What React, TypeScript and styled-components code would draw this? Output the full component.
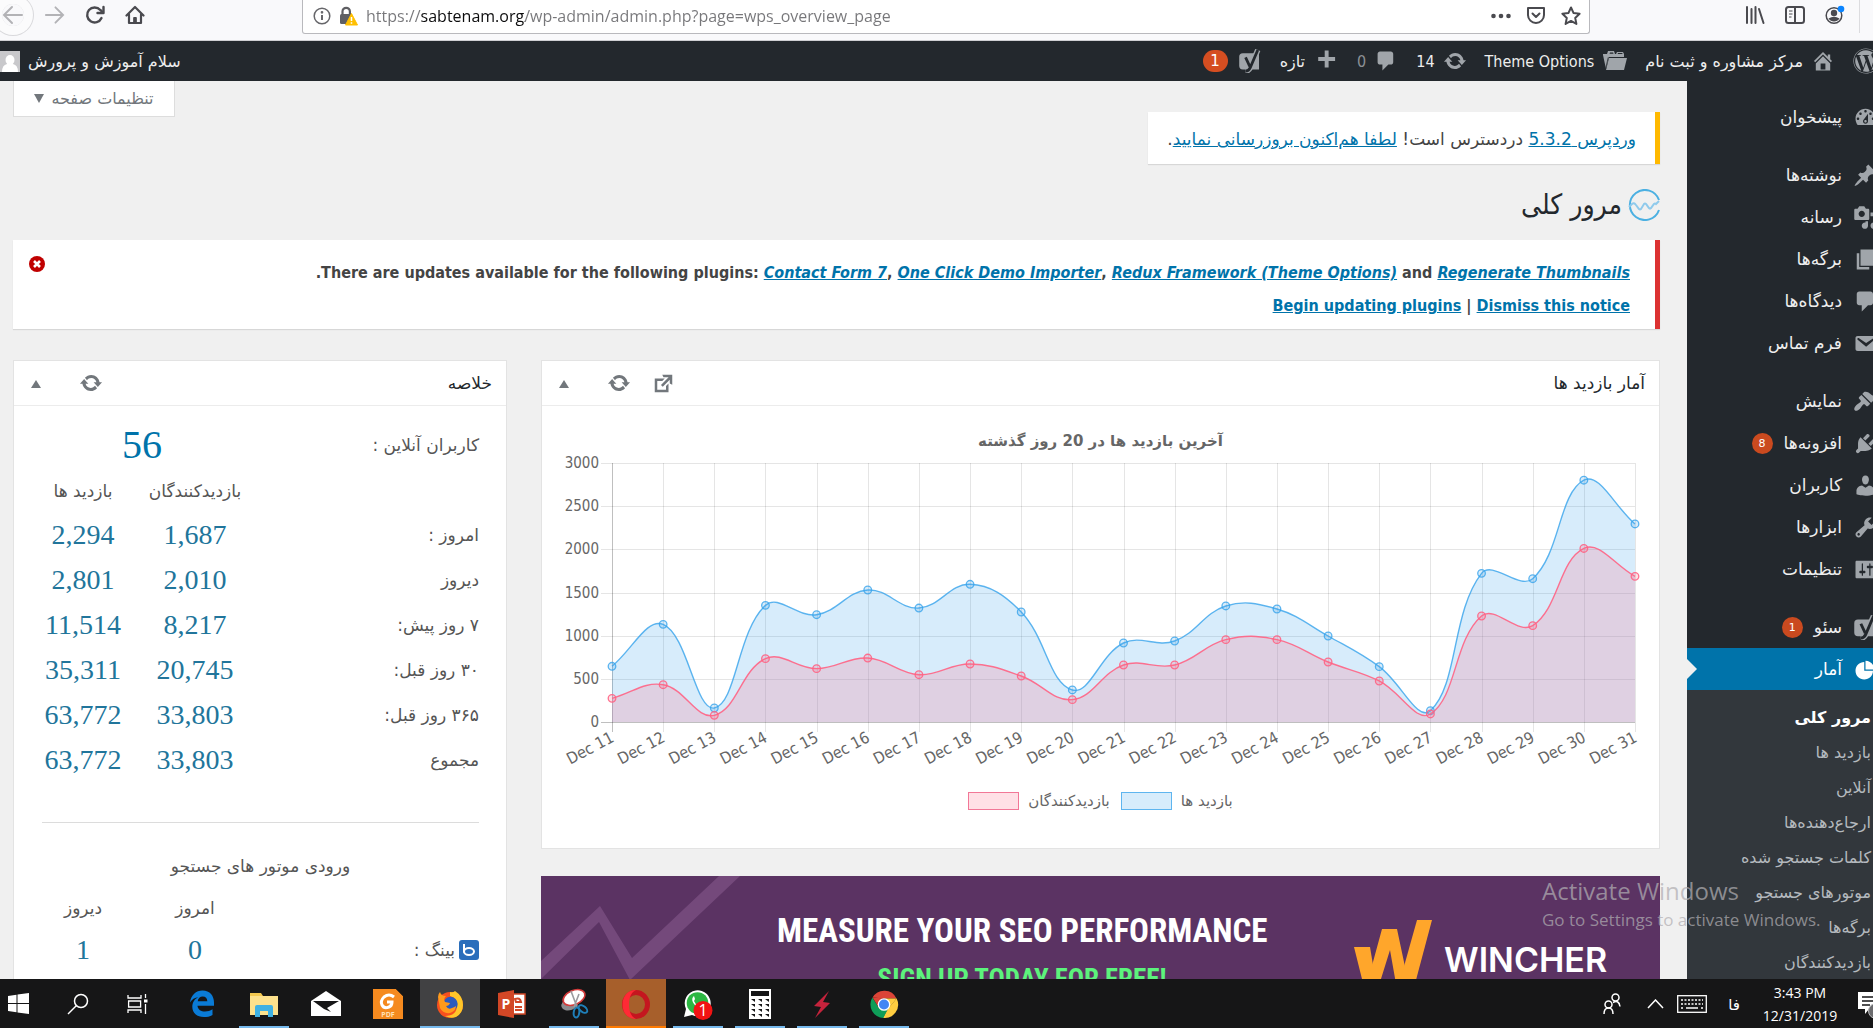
import React from "react";
import styled, { createGlobalStyle, css } from "styled-components";
import { FaWordpress } from "react-icons/fa";

const ui = '"DejaVu Sans Condensed", "DejaVu Sans", sans-serif';
const fa = '"DejaVu Sans", sans-serif';
const segoe = '"Open Sans", "Noto Sans", "DejaVu Sans", sans-serif';

const Global = createGlobalStyle`
  * { box-sizing: border-box; }
  body { margin: 0; background: #f0f0f0; font-family: ${fa}; }
  button { font: inherit; color: inherit; background: none; border: 0; padding: 0; cursor: pointer; }
  h1, h2, h3 { font-weight: normal; }
  h1, h2, h3, p, ul { margin: 0; padding: 0; }
  ul { list-style: none; }
  svg { display: block; flex: none; }
`;

/* ---------- icon shapes on a 20 unit grid ---------- */
const D = {
  dashboard:
    "M3.76 16h12.48c1.1-1.37 1.76-3.11 1.76-5 0-4.42-3.58-8-8-8s-8 3.58-8 8c0 1.89.66 3.63 1.76 5zM10 4c.55 0 1 .45 1 1s-.45 1-1 1-1-.45-1-1 .45-1 1-1zM6 6c.55 0 1 .45 1 1s-.45 1-1 1-1-.45-1-1 .45-1 1-1zm8 0c.55 0 1 .45 1 1s-.45 1-1 1-1-.45-1-1 .45-1 1-1zm-5.37 5.55L12 7v6c0 1.1-.9 2-2 2s-2-.9-2-2c0-.57.24-1.08.63-1.45zM4 10c.55 0 1 .45 1 1s-.45 1-1 1-1-.45-1-1 .45-1 1-1zm12 0c.55 0 1 .45 1 1s-.45 1-1 1-1-.45-1-1 .45-1 1-1zm-5 3c0-.55-.45-1-1-1s-1 .45-1 1 .45 1 1 1 1-.45 1-1z",
  post: "M10.44 3.02l1.82-1.82 6.36 6.35-1.83 1.82c-1.05-.68-2.48-.57-3.41.36l-.75.75c-.92.93-1.04 2.35-.35 3.41l-1.83 1.82-2.41-2.41-2.8 2.79c-.42.42-3.38 2.71-3.8 2.29s1.86-3.39 2.28-3.81l2.79-2.79L4.1 9.36l1.83-1.82c1.05.69 2.48.57 3.4-.36l.75-.75c.93-.92 1.05-2.35.36-3.41z",
  media:
    "M13 11V4c0-.55-.45-1-1-1h-1.67L9 1H5L3.67 3H2c-.55 0-1 .45-1 1v7c0 .55.45 1 1 1h10c.55 0 1-.45 1-1zM7 4.5c1.38 0 2.5 1.12 2.5 2.5S8.38 9.5 7 9.5 4.5 8.38 4.5 7 5.62 4.5 7 4.5zM14 6h5v10.5c0 1.38-1.12 2.5-2.5 2.5S14 17.88 14 16.5s1.12-2.5 2.5-2.5c.17 0 .34.02.5.05V9h-3V6zm-4 8.05V13h2v3.5c0 1.38-1.12 2.5-2.5 2.5S7 17.88 7 16.5 8.12 14 9.5 14c.17 0 .34.02.5.05z",
  page: "M6 15V2h10v13H6zm-1 1h8v2H3V5h2v11z",
  comments: "M5 2h9c1.1 0 2 .9 2 2v7c0 1.1-.9 2-2 2h-2l-5 5v-5H5c-1.1 0-2-.9-2-2V4c0-1.1.9-2 2-2z",
  email:
    "M3.87 4h13.25C18.37 4 19 4.59 19 5.79v8.42c0 1.19-.63 1.79-1.88 1.79H3.87c-1.25 0-1.88-.6-1.88-1.79V5.79c0-1.2.63-1.79 1.88-1.79zm6.62 8.6l6.74-5.53c.24-.2.43-.66.13-1.07-.29-.41-.82-.42-1.17-.17l-5.7 3.86L4.8 5.83c-.35-.25-.88-.24-1.17.17-.3.41-.11.87.13 1.07z",
  appearance:
    "M14.48 11.06L7.41 3.99l1.5-1.5c.5-.56 2.3-.47 3.51.32 1.21.8 1.43 1.28 2.91 2.1 1.18.64 2.45 1.26 4.45.85zm-.71.71L6.7 4.7 4.93 6.47c-.39.39-.39 1.02 0 1.41l1.06 1.06c.39.39.39 1.03 0 1.42-.6.6-1.43 1.11-2.21 1.69-.35.26-.7.53-1.01.84C1.43 14.23.4 16.08 1.4 17.07c.99 1 2.84-.03 4.18-1.36.31-.31.58-.66.85-1.02.57-.78 1.08-1.61 1.69-2.21.39-.39 1.02-.39 1.41 0l1.06 1.06c.39.39 1.02.39 1.41 0z",
  plugins:
    "M13.11 4.36L9.87 7.6 8 5.73l3.24-3.24c.35-.34 1.05-.2 1.56.32.52.51.66 1.21.31 1.55zm-8 1.77l.91-1.12 9.01 9.01-1.19.84c-.71.71-2.63 1.16-3.82 1.16H6.14L4.9 17.26c-.59.59-1.54.59-2.12 0-.59-.58-.59-1.53 0-2.12l1.24-1.24v-3.88c0-1.13.4-3.19 1.09-3.89zm7.26 3.97l3.24-3.24c.34-.35 1.04-.21 1.55.31.52.51.66 1.21.31 1.55l-3.24 3.25z",
  users:
    "M10 9.25c-2.27 0-2.73-3.44-2.73-3.44C7 4.02 7.82 2 9.97 2c2.16 0 2.98 2.02 2.71 3.81 0 0-.41 3.44-2.68 3.44zm0 2.57L12.72 10c2.39 0 4.52 2.33 4.52 4.53v2.49s-3.65 1.13-7.24 1.13c-3.65 0-7.24-1.13-7.24-1.13v-2.49c0-2.25 1.94-4.48 4.47-4.48z",
  tools:
    "M16.68 9.77c-1.34 1.34-3.3 1.67-4.95.99l-5.41 6.52c-.99.99-2.59.99-3.58 0s-.99-2.59 0-3.57l6.52-5.42c-.68-1.65-.35-3.61.99-4.95 1.28-1.28 3.12-1.62 4.72-1.06l-2.89 2.89 2.82 2.82 2.86-2.87c.53 1.58.18 3.39-1.08 4.65zM3.81 16.21c.4.39 1.04.39 1.43 0 .4-.4.4-1.04 0-1.43-.39-.4-1.03-.4-1.43 0-.39.39-.39 1.03 0 1.43z",
  settings:
    "M18 16V4c0-.55-.45-1-1-1H3c-.55 0-1 .45-1 1v12c0 .55.45 1 1 1h14c.55 0 1-.45 1-1zM8 11h1c.55 0 1 .45 1 1s-.45 1-1 1H8v1.5c0 .28-.22.5-.5.5s-.5-.22-.5-.5V13H6c-.55 0-1-.45-1-1s.45-1 1-1h1V5.5c0-.28.22-.5.5-.5s.5.22.5.5V11zm5-2h-1c-.55 0-1-.45-1-1s.45-1 1-1h1V5.5c0-.28.22-.5.5-.5s.5.22.5.5V7h1c.55 0 1 .45 1 1s-.45 1-1 1h-1v5.5c0 .28-.22.5-.5.5s-.5-.22-.5-.5V9z",
  pie: "M10 10V3c3.87 0 7 3.13 7 7h-7zM9 4v7h7c0 3.87-3.13 7-7 7s-7-3.13-7-7 3.13-7 7-7z",
  plus: "M17 7v3h-5v5H9v-5H4V7h5V2h3v5z",
  update:
    "M10.2 3.28c3.53 0 6.43 2.61 6.92 6h2.08l-3.5 4-3.5-4h2.32c-.45-1.97-2.21-3.45-4.32-3.45-1.45 0-2.73.71-3.54 1.78L4.95 5.66C6.23 4.2 8.11 3.28 10.2 3.28zm-.4 13.44c-3.52 0-6.43-2.61-6.92-6H.8l3.5-4c1.17 1.33 2.33 2.67 3.5 4H5.48c.45 1.97 2.21 3.45 4.32 3.45 1.45 0 2.73-.71 3.54-1.78l1.71 1.95c-1.28 1.46-3.15 2.38-5.25 2.38z",
  external: "M9 3h8v8l-2-1V6.92l-5.6 5.59-1.41-1.41L14.08 5H10zm3 12v-3l2-2v7H3V6h8L9 8H5v7h7z",
  home: "M16 8.5l1.53 1.53-1.06 1.06L10 4.6l-6.47 6.5-1.06-1.07L10 2.5l4 4v-2h2v4zm-6-2.46l6 5.99V18H4v-5.97zM12 17v-5H8v5h4z",
};

const Dash = ({ d, size = 25 }: { d: string; size?: number }) => (
  <svg width={size} height={size} viewBox="0 0 20 20" fill="currentColor" aria-hidden="true">
    <path d={d} fillRule="evenodd" />
  </svg>
);

const Folder = () => (
  <svg width="25" height="24" viewBox="0 0 25 24" fill="currentColor" aria-hidden="true">
    <path d="M1 5h4l1-3h6l1 3h1l1-2h6l1 2v3H7L4 20 1 6z" />
    <path d="M7 9h18l-3 12H4z" />
    <path d="M7.500 4.800l.5-1.300h3l.5 1.300zM15.500 5l.6-1h4l.6 1z" fill="#23282d" />
    <path d="M6.300 8.300L3.600 20" stroke="#23282d" strokeWidth=".8" fill="none" />
  </svg>
);

const Yoast = ({ size = 25 }: { size?: number }) => (
  <svg width={size} height={size} viewBox="0 0 20 20" aria-hidden="true">
    <path d="M4 3.500h13.500V17H4a3 3 0 0 1-3-3V6.500a3 3 0 0 1 3-3z" fill="currentColor" />
    <path d="M16.500.8L10.200 15.500q-1.200 2.800-4 3" fill="none" stroke="currentColor" strokeWidth="4.600" />
    <path d="M16.500.8L10.200 15.500q-1.200 2.800-4 3M6.300 7l3.500 7.500" fill="none" stroke="#23282d" strokeWidth="2.300" />
  </svg>
);

/* ---------- page shell ---------- */
const Page = styled.div`
  height: 100vh;
  display: flex;
  flex-direction: column;
  overflow: hidden;
`;

/* ---------- browser toolbar ---------- */
const BrowserBar = styled.header`
  height: 41px;
  flex: none;
  display: flex;
  background: #f9f9fb;
  border-bottom: 1px solid #cfcfd3;
  color: #4a4a4f;
  overflow: hidden;
`;
const NavButtons = styled.div`
  display: flex;
  gap: 20px;
  width: 302px;
  height: 30px;
  padding-left: 2px;
  align-items: center;
  flex: none;
`;
const NavButton = styled.button<{ $dim?: boolean }>`
  color: ${(p) => (p.$dim ? "#b3b3b6" : "#4a4a4f")};
`;
const BackButton = styled(NavButton)`
  box-shadow: 0 0 0 9px #fbfbfc, 0 0 0 10px #d9d9dc;
  border-radius: 50%;
`;
const UrlBox = styled.div`
  flex: 1;
  height: 34px;
  display: flex;
  align-items: center;
  gap: 8px;
  padding: 0 8px 2px 10px;
  background: #fff;
  border: 1px solid #b9b9bd;
  border-top: 0;
  border-radius: 0 0 3px 3px;
  color: #66666a;
`;
const UrlInput = styled.input`
  flex: 1;
  min-width: 0;
  height: 26px;
  border: 0;
  outline: 0;
  padding: 0;
  font: 16px ${segoe};
  color: #77777a;
  background: linear-gradient(90deg, #77777a 55px, #0c0c0d 55px, #0c0c0d 159px, #77777a 159px);
  -webkit-background-clip: text;
  background-clip: text;
  -webkit-text-fill-color: transparent;
`;
const UrlActions = styled.div`
  display: flex;
  gap: 15px;
  align-items: center;
`;
const BrowserTools = styled.div`
  display: flex;
  align-items: center;
  justify-content: flex-end;
  gap: 20px;
  width: 283px;
  height: 30px;
  flex: none;
  padding-right: 13px;
`;
const ToolDivider = styled.span`
  width: 1px;
  height: 36px;
  background: #dcdcdf;
  margin-left: -6px;
`;

/* ---------- admin bar ---------- */
const AdminBar = styled.nav`
  height: 40px;
  flex: none;
  display: flex;
  align-items: center;
  background: #23282d;
  color: #eee;
  font-size: 16px;
  overflow: hidden;
`;
const BarItems = styled.div`
  display: flex;
  align-items: center;
  gap: 18px;
  margin-right: -6px;
  flex: 1;
`;
const BarLink = styled.a<{ $dim?: boolean; $latin?: boolean }>`
  display: flex;
  align-items: center;
  gap: 8px;
  color: ${(p) => (p.$dim ? "#8b9095" : "#eee")};
  font-family: ${(p) => (p.$latin ? ui : fa)};
  text-decoration: none;
  white-space: nowrap;
  svg {
    color: #a0a5aa;
  }
`;
const BarBadge = styled.span`
  min-width: 25px;
  height: 22px;
  border-radius: 12px;
  background: #d54e21;
  color: #fff;
  text-align: center;
  line-height: 22px;
  font-size: 15px;
  margin-right: 2px;
`;
const Avatar = styled.span`
  width: 20px;
  height: 21px;
  background: #c8c8cb;
  overflow: hidden;
`;

/* ---------- body ---------- */
const Body = styled.div`
  flex: 1;
  min-height: 0;
  display: flex;
  position: relative;
  overflow: hidden;
`;
const Sidebar = styled.nav`
  width: 200px;
  margin-right: -14px;
  flex: none;
  background: #23282d;
  padding-top: 15px;
  overflow: hidden;
`;
const MenuItem = styled.li<{ $gap?: boolean; $active?: boolean }>`
  ${(p) => p.$gap && css`margin-top: 16px;`}
  ${(p) =>
    p.$active &&
    css`
      background: #0073aa;
      position: relative;
      &::after {
        content: "";
        position: absolute;
        left: 0;
        top: 11px;
        border: 10px solid transparent;
        border-right: 0;
        border-left-color: #f0f0f0;
      }
    `}
`;
const MenuLink = styled.a<{ $active?: boolean }>`
  height: 42px;
  display: flex;
  align-items: center;
  padding-right: 9px;
  gap: 11px;
  font-size: 17px;
  color: ${(p) => (p.$active ? "#fff" : "#eee")};
  text-decoration: none;
  white-space: nowrap;
  svg {
    color: ${(p) => (p.$active ? "#fff" : "#a0a5aa")};
  }
`;
const MenuBadge = styled.span`
  width: 21px;
  height: 21px;
  border-radius: 50%;
  background: #ca4a1f;
  color: #fff;
  font-size: 11px;
  line-height: 21px;
  text-align: center;
`;
const SubMenu = styled.ul`
  background: #32373c;
  padding: 10px 16px 40px 0;
`;
const SubLink = styled.a<{ $current?: boolean }>`
  display: block;
  height: 35px;
  line-height: 35px;
  font-size: 16px;
  white-space: nowrap;
  text-decoration: none;
  color: ${(p) => (p.$current ? "#fff" : "#b4b9be")};
  font-weight: ${(p) => (p.$current ? 700 : 400)};
`;

const Content = styled.main`
  flex: 1;
  min-width: 0;
  display: flex;
  flex-direction: column;
  padding: 0 27px 0 13px;
  color: #444;
`;
const TopRow = styled.div`
  display: flex;
  align-items: flex-start;
  justify-content: space-between;
`;
const Notice = styled.div<{ $tone: string }>`
  background: #fff;
  border-right: 5px solid ${(p) => p.$tone};
  box-shadow: 0 1px 1px rgba(0, 0, 0, 0.1);
  a {
    color: #0073aa;
  }
`;
const UpdateNotice = styled(Notice)`
  margin-top: 31px;
  height: 52px;
  padding: 0 19px;
  line-height: 54px;
  font-size: 17px;
  white-space: nowrap;
`;
const ScreenOptions = styled.button`
  height: 36px;
  width: 162px;
  background: #fff;
  border: 1px solid #ddd;
  border-top: 0;
  color: #72777c;
  font-size: 16px;
  display: flex;
  align-items: center;
  justify-content: center;
  gap: 7px;
`;
const TitleRow = styled.div`
  margin-top: 25px;
  height: 32px;
  display: flex;
  align-items: center;
  gap: 6px;
  color: #23282d;
`;
const PageTitle = styled.h1`
  font-family: ${ui};
  font-size: 28px;
  line-height: 32px;
`;
const PluginNotice = styled(Notice)`
  margin-top: 19px;
  height: 89px;
  padding: 16px 25px 0 15px;
  display: flex;
  justify-content: space-between;
  align-items: flex-start;
  font-family: ${ui};
  font-size: 16px;
  font-weight: 700;
  line-height: 33px;
`;
const LatinLine = styled.p`
  text-align: right;
`;
const CloseButton = styled.button`
  width: 16px;
  height: 16px;
  margin-left: 1px;
`;
const Columns = styled.div`
  margin-top: 31px;
  flex: 1;
  min-height: 0;
  display: grid;
  grid-template-columns: minmax(0, 1119fr) minmax(0, 494fr);
  gap: 34px;
`;
const MainColumn = styled.div`
  display: flex;
  flex-direction: column;
  gap: 27px;
`;
const Box = styled.section`
  background: #fff;
  border: 1px solid #e3e3e3;
`;
const BoxHead = styled.div`
  height: 45px;
  border-bottom: 1px solid #ececec;
  padding: 0 14px 0 17px;
  display: flex;
  align-items: center;
`;
const BoxTitle = styled.h2`
  flex: 1;
  font-size: 17px;
  color: #23282d;
`;
const HeadActions = styled.div`
  display: flex;
  align-items: center;
  color: #72777c;
`;
const HeadButton = styled.button`
  width: 45px;
  height: 40px;
  display: grid;
  place-items: center;
`;
const Toggle = styled(HeadButton)`
  width: 37px;
  justify-items: end;
`;
const ChartTitle = styled.h3`
  padding-top: 25px;
  font-size: 15px;
  line-height: 20px;
  font-weight: 700;
  text-align: center;
  color: #666;
`;
const ChartArea = styled.div`
  padding: 4px 14px 0;
  svg {
    width: 100%;
    height: auto;
    overflow: visible;
  }
`;
const Legend = styled.div`
  display: flex;
  justify-content: center;
  gap: 11px;
  padding: 26px 0 37px;
  line-height: 20px;
  font-size: 15px;
  color: #666;
`;
const LegendItem = styled.span`
  display: flex;
  align-items: center;
  gap: 9px;
`;
const Swatch = styled.i<{ $line: string; $fill: string }>`
  width: 51px;
  height: 18px;
  border: 1px solid ${(p) => p.$line};
  background: ${(p) => p.$fill};
`;

const SummaryBody = styled.div`
  padding: 14px 27px 0 28px;
`;
const StatTable = styled.table`
  width: 100%;
  border-collapse: collapse;
  table-layout: fixed;
  font-size: 17px;
  color: #555;
`;
const RowLabel = styled.th`
  font-weight: normal;
  text-align: right;
  padding: 0;
`;
const ColHead = styled.th`
  font-weight: normal;
  padding: 0;
  height: 42px;
  white-space: nowrap;
`;
const Row = styled.tr<{ $h: number }>`
  height: ${(p) => p.$h}px;
`;
const Num = styled.td`
  padding: 0;
  text-align: center;
  font: 28px/1 "Liberation Serif", serif;
  color: #21759b;
`;
const BigNum = styled(Num)`
  font-size: 40px;
  padding-right: 24px;
  a {
    color: #0073aa;
    text-decoration: none;
  }
`;
const Rule = styled.hr`
  border: 0;
  border-top: 1px solid #dcdcdc;
  margin: 40px 0 22px;
`;
const SectionTitle = styled.h3`
  height: 42px;
  line-height: 42px;
  font-size: 17px;
  text-align: center;
  color: #555;
`;
const BingLabel = styled.span`
  display: flex;
  align-items: center;
  gap: 4px;
`;

const Banner = styled.a`
  flex: 1;
  min-height: 104px;
  position: relative;
  display: flex;
  direction: ltr;
  justify-content: flex-end;
  gap: 87px;
  padding-right: 53px;
  background: #5b3363;
  text-decoration: none;
  overflow: hidden;
`;
const BannerLines = styled.svg`
  position: absolute;
  left: 0;
  top: 0;
`;
const BannerText = styled.div`
  width: 490px;
  padding-top: 31px;
  text-align: center;
  font-family: "Roboto Condensed", "Liberation Sans Narrow", "Liberation Sans", sans-serif;
  font-weight: 700;
  white-space: nowrap;
`;
const Headline = styled.p`
  color: #fff;
  font-size: 33px;
  line-height: 48px;
`;
const Subline = styled.p`
  color: #5cf37c;
  font-size: 27px;
  line-height: 40px;
  margin-top: 4px;
`;
const Brand = styled.div`
  display: flex;
  gap: 12px;
  width: 253px;
  padding-top: 44px;
`;
const BrandName = styled.span`
  color: #fff;
  padding-top: 20px;
  font: 600 34px/40px Inter, sans-serif;
`;

const Watermark = styled.div`
  position: absolute;
  right: 48px;
  bottom: 46px;
  width: 283px;
  direction: ltr;
  font-family: ${segoe};
  color: rgba(176, 174, 178, 0.72);
  pointer-events: none;
  white-space: nowrap;
`;
const WatermarkTitle = styled.p`
  font-size: 24px;
  line-height: 32px;
`;
const WatermarkText = styled.p`
  font-size: 17px;
  line-height: 26px;
`;

/* ---------- taskbar ---------- */
const Taskbar = styled.footer`
  height: 49px;
  flex: none;
  background: #161617;
  display: flex;
  color: #fff;
  font-family: ${segoe};
  overflow: hidden;
`;
const StartButton = styled.button`
  width: 48px;
  padding-left: 8px;
`;
const SystemButton = styled.button`
  width: 60px;
  display: grid;
  place-items: center;
`;
const Apps = styled.div`
  display: flex;
  gap: 2px;
  margin-left: 4px;
  flex: 1;
`;
const AppButton = styled.button<{ $bg?: string; $line?: string; $wide?: boolean }>`
  width: 60px;
  display: grid;
  place-items: center;
  position: relative;
  background: ${(p) => p.$bg || "transparent"};
  &::after {
    content: "";
    position: absolute;
    bottom: 0;
    left: ${(p) => (p.$wide ? 0 : 5)}px;
    right: ${(p) => (p.$wide ? 0 : 5)}px;
    height: 2px;
    background: ${(p) => p.$line || "transparent"};
  }
`;
const Tray = styled.div`
  display: flex;
  align-items: center;
  margin-right: -28px;
`;
const TrayButton = styled.button<{ $w: number }>`
  width: ${(p) => p.$w}px;
  height: 49px;
  display: grid;
  place-items: center;
  font-size: 15px;
`;
const Clock = styled.button`
  width: 82px;
  font-size: 14px;
  line-height: 23px;
  text-align: center;
`;

/* ---------- chart ---------- */
const visits = [645, 1131, 162, 1351, 1243, 1529, 1320, 1595, 1274, 371, 915, 938, 1344, 1309, 996, 641, 131, 1722, 1660, 2801, 2294];
const visitors = [274, 432, 77, 734, 618, 741, 548, 672, 533, 259, 660, 660, 954, 954, 695, 475, 93, 1228, 1116, 2010, 1687];
const X0 = 56, X1 = 1079, Y0 = 267, Y1 = 8;
const px = (i: number) => X0 + ((X1 - X0) * i) / 20;
const py = (v: number) => Y0 - ((Y0 - Y1) * v) / 3000;

function curve(data: number[]) {
  const p = data.map((v, i) => [px(i), py(v)]);
  const ctl = p.map((c, i) => {
    const a = p[i - 1] || c;
    const b = p[i + 1] || c;
    const d1 = Math.hypot(c[0] - a[0], c[1] - a[1]);
    const d2 = Math.hypot(b[0] - c[0], b[1] - c[1]);
    const f1 = (0.4 * d1) / (d1 + d2);
    const f2 = (0.4 * d2) / (d1 + d2);
    return [
      [c[0] - f1 * (b[0] - a[0]), c[1] - f1 * (b[1] - a[1])],
      [c[0] + f2 * (b[0] - a[0]), c[1] + f2 * (b[1] - a[1])],
    ];
  });
  return p.map((c, i) => (i ? `C${ctl[i - 1][1]} ${ctl[i][0]} ${c}` : `M${c}`)).join(" ");
}

const Series = ({ data, line, fill }: { data: number[]; line: string; fill: string }) => {
  const d = curve(data);
  return (
    <g>
      <path d={`${d} L${X1} ${Y0} L${X0} ${Y0}Z`} fill={fill} />
      <path d={d} fill="none" stroke={line} strokeWidth="1.4" />
      {data.map((v, i) => (
        <circle key={i} cx={px(i)} cy={py(v)} r="3.8" fill={fill} stroke={line} strokeWidth="1.3" />
      ))}
    </g>
  );
};

const Chart = () => (
  <svg viewBox="0 0 1089 310" role="img" aria-label="آمار بازدید ها" fontFamily={ui} fontSize="15" fill="#666" direction="ltr">
    <g stroke="#000">
      {Array.from({ length: 7 }, (_, i) => (
        <path key={i} strokeOpacity={i ? 0.1 : 0.25} d={`M${X0 - 11} ${Math.round(py(i * 500)) + 0.5}H${X1}`} />
      ))}
      {visits.map((_, i) => (
        <path key={i} strokeOpacity={i ? 0.1 : 0.25} d={`M${Math.round(px(i)) + 0.5} ${Y1}V${Y0 + 10}`} />
      ))}
    </g>
    <Series data={visits} line="rgba(54,162,235,.8)" fill="rgba(54,162,235,.2)" />
    <Series data={visitors} line="rgba(255,99,132,.9)" fill="rgba(255,99,132,.2)" />
    {Array.from({ length: 7 }, (_, i) => (
      <text key={i} x="43" y={py(i * 500) + 5} textAnchor="end">
        {i * 500}
      </text>
    ))}
    {visits.map((_, i) => (
      <text key={i} fontSize="16" textAnchor="end" transform={`translate(${px(i) + 3} ${Y0 + 19}) rotate(-28)`}>
        {`Dec ${11 + i}`}
      </text>
    ))}
  </svg>
);

/* ---------- data ---------- */
const menu: { t: string; d?: string; gap?: boolean; n?: number }[] = [
  { t: "پیشخوان", d: D.dashboard },
  { t: "نوشته‌ها", d: D.post, gap: true },
  { t: "رسانه", d: D.media },
  { t: "برگه‌ها", d: D.page },
  { t: "دیدگاه‌ها", d: D.comments },
  { t: "فرم تماس", d: D.email },
  { t: "نمایش", d: D.appearance, gap: true },
  { t: "افزونه‌ها", d: D.plugins, n: 8 },
  { t: "کاربران", d: D.users },
  { t: "ابزارها", d: D.tools },
  { t: "تنظیمات", d: D.settings },
  { t: "سئو", gap: true, n: 1 },
];
const submenu = ["مرور کلی", "بازدید ها", "آنلاین", "ارجاع‌دهنده‌ها", "کلمات جستجو شده", "موتورهای جستجو", "برگه‌ها", "بازدیدکنندگان"];
const stats = [
  ["امروز :", "1,687", "2,294"],
  ["دیروز", "2,010", "2,801"],
  ["۷ روز پیش:", "8,217", "11,514"],
  ["۳۰ روز قبل:", "20,745", "35,311"],
  ["۳۶۵ روز قبل:", "33,803", "63,772"],
  ["مجموع", "33,803", "63,772"],
];

const Cols = () => (
  <colgroup>
    <col />
    <col width="142" />
    <col width="82" />
  </colgroup>
);

const Arrow = ({ up }: { up?: boolean }) => (
  <svg width="10" height="9" viewBox="0 0 10 9" fill="#72777c" aria-hidden="true">
    <path d={up ? "M5 1l5 8H0z" : "M0 0h10L5 9z"} />
  </svg>
);

const Browser = () => (
  <BrowserBar>
    <NavButtons>
      <BackButton $dim aria-label="Back">
        <svg width="22" height="22" viewBox="0 0 22 22" fill="none" stroke="currentColor" strokeWidth="2" strokeLinecap="round"><path d="M20 11H2M10 3l-8 8 8 8" /></svg>
      </BackButton>
      <NavButton $dim aria-label="Forward">
        <svg width="21" height="22" viewBox="0 0 22 22" fill="none" stroke="currentColor" strokeWidth="2" strokeLinecap="round"><path d="M2 11h18M12 3l8 8-8 8" /></svg>
      </NavButton>
      <NavButton aria-label="Reload">
        <svg width="20" height="20" viewBox="0 0 20 20" fill="none" stroke="currentColor" strokeWidth="2.4" strokeLinecap="round"><path d="M16.5 13A7.5 7.5 0 1 1 15.3 5l2.5 2.3" /><path d="M18.500 2v6h-6" strokeLinejoin="round" /></svg>
      </NavButton>
      <NavButton aria-label="Home">
        <svg width="20" height="20" viewBox="0 0 20 20" fill="none" stroke="currentColor" strokeWidth="2.2" strokeLinecap="round" strokeLinejoin="round"><path d="M1.500 10.500L10 2l8.500 8.500M4 9.500V18h12V9.500" /><path d="M8.700 18v-5.500h2.600V18z" fill="currentColor" strokeWidth="1" /></svg>
      </NavButton>
    </NavButtons>
    <UrlBox>
      <svg width="18" height="18" viewBox="0 0 18 18" fill="none" stroke="currentColor" strokeWidth="1.5"><circle cx="9" cy="9" r="7.800" /><path d="M9 8v5" strokeWidth="2" /><circle cx="9" cy="5.300" r=".6" fill="currentColor" /></svg>
      <svg width="19" height="20" viewBox="0 0 19 20"><path d="M3.500 9V5.500a3.700 3.700 0 0 1 7.400 0V9" fill="none" stroke="#5f5f63" strokeWidth="2.2" /><rect x="1" y="8" width="12" height="10" rx="1.5" fill="#5f5f63" /><path d="M12.500 7.500l6 11.500h-12z" fill="#ffbf00" stroke="#ffbf00" strokeLinejoin="round" /><path d="M12.500 11v4M12.500 16.300v1.400" stroke="#fff" strokeWidth="1.5" /></svg>
      <UrlInput aria-label="Address" defaultValue="https://sabtenam.org/wp-admin/admin.php?page=wps_overview_page" />
      <UrlActions>
        <NavButton aria-label="Page actions"><svg width="20" height="6" viewBox="0 0 20 6" fill="currentColor"><circle cx="2.500" cy="3" r="2.300" /><circle cx="10" cy="3" r="2.300" /><circle cx="17.500" cy="3" r="2.300" /></svg></NavButton>
        <NavButton aria-label="Save to Pocket"><svg width="20" height="20" viewBox="0 0 20 20" fill="none" stroke="currentColor" strokeWidth="2" strokeLinecap="round" strokeLinejoin="round"><path d="M2 2h16v7a8 8 0 0 1-16 0z" /><path d="M6.500 7.500L10 11l3.500-3.500" /></svg></NavButton>
        <NavButton aria-label="Bookmark"><svg width="20" height="20" viewBox="0 0 20 20" fill="none" stroke="currentColor" strokeWidth="2" strokeLinejoin="round"><path d="M10 1.500l2.600 5.600 6 .7-4.400 4.100 1.200 6-5.400-3-5.400 3 1.200-6L1.400 7.800l6-.7z" /></svg></NavButton>
      </UrlActions>
    </UrlBox>
    <BrowserTools>
      <NavButton aria-label="Library"><svg width="20" height="20" viewBox="0 0 20 20" fill="none" stroke="currentColor" strokeWidth="2" strokeLinecap="round"><path d="M2 2v16M6.500 4v14M10.500 2v16M14 4l4.500 14" /></svg></NavButton>
      <NavButton aria-label="Sidebars"><svg width="20" height="20" viewBox="0 0 20 20" fill="none" stroke="currentColor" strokeWidth="2"><rect x="1" y="2" width="18" height="16" rx="2.5" /><path d="M10 2v16" /><path d="M4 6h3.500M4 9h3.500M4 12h2.500" strokeWidth="1.2" /></svg></NavButton>
      <NavButton aria-label="Account"><svg width="20" height="20" viewBox="0 0 20 20"><circle cx="9" cy="10.500" r="7.800" fill="none" stroke="currentColor" strokeWidth="1.5" /><circle cx="9" cy="8" r="3.200" fill="currentColor" /><path d="M3.500 13.500q5.500-3.500 11 0a6.500 6.500 0 0 1-11 0z" fill="currentColor" /><circle cx="16" cy="4" r="3.300" fill="#0a84ff" /></svg></NavButton>
      <ToolDivider />
    </BrowserTools>
  </BrowserBar>
);

const svgBox = { width: 30, height: 32, viewBox: "0 0 30 32" };

const TaskbarView = () => (
  <Taskbar>
    <StartButton aria-label="Start">
      <svg width="21" height="21" viewBox="0 0 21 21" fill="#fff"><path d="M0 3l8.500-1.200V10H0zM9.500 1.600L21 0v10H9.500zM0 11h8.500v8.200L0 18zM9.500 11H21v10L9.500 19.400z" /></svg>
    </StartButton>
    <SystemButton aria-label="Search">
      <svg width="22" height="22" viewBox="0 0 22 22" fill="none" stroke="#fff" strokeWidth="1.5"><circle cx="14" cy="8" r="6.500" /><path d="M9.500 12.500L1 21" /></svg>
    </SystemButton>
    <SystemButton aria-label="Task view">
      <svg width="22" height="20" viewBox="0 0 22 20" fill="none" stroke="#fff" strokeWidth="1.3"><path d="M1 1v3h13V1M1 19v-3h13v3M1.600 7h12v6h-12zM18.500 0v4M18.500 10v10" /><path d="M17 5.500h3.500v3H17z" fill="#fff" stroke="none" /></svg>
    </SystemButton>
    <Apps>
      <AppButton aria-label="Edge">
        <svg {...svgBox}><path fill="#0a7bd6" d="M3 14.500C4 7 9 2.500 15.500 2.500 23 2.500 27 8 27 14.500v3.200H10.500c.3 4 3.600 5.800 7.500 5.800 2.800 0 5.200-.8 7.500-2.200v5.600c-2.500 1.500-5.600 2.200-8.700 2.200-6.800 0-11.500-4-11.500-10.300 0-4.300 2.400-7.800 6-9.500-3.500.3-6.500 2.200-8.300 5.200zm7.700-1.200h9.600c0-3-1.700-4.800-4.600-4.800-2.700 0-4.600 1.800-5 4.800z" /></svg>
      </AppButton>
      <AppButton aria-label="File Explorer" $line="#76b9ed">
        <svg {...svgBox}><path fill="#f3c84f" d="M1 5h11l2 3h15v6H1z" /><path fill="#fde18c" d="M1 8h28v19H1z" /><path fill="#3fb1e3" d="M6 19q0-2 2-2h14q2 0 2 2v10h-5v-6h-8v6H6z" /></svg>
      </AppButton>
      <AppButton aria-label="Mail">
        <svg {...svgBox}><path fill="#fff" d="M0 13L15 3l15 10v15H0z" /><path fill="#161617" d="M2 13h26l-12 7 4 4-7-3z" /></svg>
      </AppButton>
      <AppButton aria-label="Foxit PDF">
        <svg {...svgBox}><path fill="#f58a1f" d="M0 1h23l7 7v23H0z" /><path fill="#161617" d="M23 1h7v7z" /><path d="M21 9q-5-4-10 0-4 4-2 8 2 4 7 2 3-1 3-5h-5" fill="none" stroke="#fff" strokeWidth="3" /><text x="15" y="29" fontSize="7" fontWeight="700" textAnchor="middle" fill="#ffe0b5">PDF</text></svg>
      </AppButton>
      <AppButton aria-label="Firefox" $bg="#414143" $line="#76b9ed" $wide>
        <svg {...svgBox}><circle cx="15" cy="17" r="13" fill="#f6501e" /><path d="M15 4q3 1 5-1 8 5 8 14 0 8-7 12-5 2-11-1 12 0 12-11 0-7-7-9z" fill="#ffc629" /><circle cx="15.500" cy="16" r="7.200" fill="#2a5bbf" /><path d="M3 9q0-3 2-5 1 4 6 4-3 3-1 6l5 1q-1 3-4 3 2 4 6 2 3-1 4-2 0 5-6 7-7 1-10-5z" fill="#ff9a1c" /></svg>
      </AppButton>
      <AppButton aria-label="PowerPoint">
        <svg {...svgBox}><path fill="#fff" stroke="#d24726" strokeWidth="1.5" d="M14 6h14v20H14z" /><path fill="none" stroke="#d24726" strokeWidth="2" d="M18 11q5-2 6 3h-5zM18 19h7M18 22h7" /><path fill="#d24726" d="M1 5l16-3v28L1 27z" /><text x="9" y="21" fontSize="14" fontWeight="700" textAnchor="middle" fill="#fff">P</text></svg>
      </AppButton>
      <AppButton aria-label="Snipping Tool" $line="#76b9ed">
        <svg {...svgBox}><ellipse cx="11" cy="16" rx="9" ry="6" fill="#8b8b8e" transform="rotate(-20 11 16)" /><ellipse cx="15" cy="9.500" rx="11.500" ry="7" fill="#fff" stroke="#d33a3a" strokeWidth="1.6" transform="rotate(-24 15 9.500)" /><path d="M12 3l6 16M20 6l-5 13" stroke="#9a9a9e" strokeWidth="1.6" /><g fill="none" stroke="#1f7fb8" strokeWidth="2"><ellipse cx="17.500" cy="24.500" rx="2.800" ry="5" transform="rotate(8 17.500 24.500)" /><ellipse cx="24" cy="21" rx="2.800" ry="5" transform="rotate(-50 24 21)" /></g></svg>
      </AppButton>
      <AppButton aria-label="Opera" $bg="#a75f2b" $line="#ff7a00" $wide>
        <svg {...svgBox}><ellipse cx="15" cy="16.500" rx="11.500" ry="12" fill="none" stroke="#c4161f" strokeWidth="5" /><path d="M15 2C7 2 1.500 8 1.500 16.500S7 31 15 31c-4.500-2-7-7-7-14.500S10.500 4 15 2z" fill="#ff2a35" /></svg>
      </AppButton>
      <AppButton aria-label="WhatsApp" $line="#76b9ed">
        <svg {...svgBox}><path d="M1 29l2-8A13 13 0 1 1 9 27z" fill="#fff" /><circle cx="14.500" cy="15" r="10.800" fill="#2cb742" /><path d="M10 9q-2 3 1 7t7 4q3-1 2-3l-3-1-2 1q-3-1-4-4l1-2-1-3z" fill="#fff" /><circle cx="20" cy="22.500" r="9.500" fill="#f21313" /><text x="20" y="28" fontSize="16" textAnchor="middle" fill="#fff">1</text></svg>
      </AppButton>
      <AppButton aria-label="Calculator" $line="#76b9ed">
        <svg width="22" height="30" viewBox="0 0 22 30"><path fill="#fff" d="M0 0h22v30H0z" /><path fill="#161617" d="M2 2h18v5H2z" />{[11, 16, 21, 26].map((y) => [2, 9, 16].map((x) => <path key={`${x}-${y}`} fill="#161617" d={`M${x} ${y - 1}h4v3z`} />))}</svg>
      </AppButton>
      <AppButton aria-label="Flash" $line="#76b9ed">
        <svg {...svgBox}><path d="M22 3L7 18l7 1-6 11 15-15-7-1z" fill="#c5233c" /></svg>
      </AppButton>
      <AppButton aria-label="Chrome" $line="#76b9ed">
        <svg {...svgBox}><path d="M3.600 9.500A13.500 13.500 0 0 1 27.500 10.500H15z" fill="#db4437" /><path d="M27.600 10.500A13.500 13.500 0 0 1 14 30l6.500-11z" fill="#ffcd40" /><path d="M14.500 30A13.500 13.500 0 0 1 3.400 9.500L10 20l6 4z" fill="#0f9d58" /><path d="M3.600 9.500L10 20l6-9.500z" fill="#db4437" /><path d="M16 10.500h11.600L20 20z" fill="#ffcd40" /><path d="M10 19l10 0-5.500 11z" fill="#0f9d58" /><path d="M20 19l-5.500 11L20 28z" fill="#ffcd40" /><circle cx="15" cy="16.500" r="6.300" fill="#fff" /><circle cx="15" cy="16.500" r="5" fill="#4285f4" /></svg>
      </AppButton>
    </Apps>
    <Tray>
      <TrayButton $w={46} aria-label="People">
        <svg width="18" height="22" viewBox="0 0 18 22" fill="none" stroke="#fff" strokeWidth="1.5"><circle cx="12.500" cy="4.500" r="3.500" /><circle cx="5.500" cy="11.500" r="3.500" /><path d="M1 21q0-6 4.500-6t4.500 6M10 9.500q6-3 7 4" /></svg>
      </TrayButton>
      <TrayButton $w={40} aria-label="Show hidden icons">
        <svg width="17" height="10" viewBox="0 0 17 10" fill="none" stroke="#fff" strokeWidth="1.5"><path d="M1 9l7.500-8L16 9" /></svg>
      </TrayButton>
      <TrayButton $w={34} aria-label="Touch keyboard">
        <svg width="30" height="18" viewBox="0 0 30 18" fill="none" stroke="#fff" strokeWidth="1.3"><rect x=".7" y=".7" width="28.600" height="16.600" /><path d="M4 5h22M4 9h22" strokeDasharray="2 1.5" /><path d="M4 13h2M9 13h12M24 13h2" /></svg>
      </TrayButton>
      <TrayButton $w={50} aria-label="Input language">فا</TrayButton>
      <Clock aria-label="Clock">
        3:43 PM
        <br />
        12/31/2019
      </Clock>
      <TrayButton $w={60} aria-label="Notifications">
        <svg width="28" height="28" viewBox="0 0 28 28"><path d="M1 2h23v17H12l-4 5v-5H1z" fill="#fff" /><path d="M5 7h16M5 11h16M5 15h8" stroke="#161617" strokeWidth="1.5" /><circle cx="19" cy="21" r="7.500" fill="#6b6b6e" stroke="#b8b8ba" /></svg>
      </TrayButton>
    </Tray>
  </Taskbar>
);

export default function App() {
  return (
    <Page>
      <Global />
      <Browser />
      <AdminBar dir="rtl">
        <BarItems>
          <BarLink href="#" aria-label="WordPress"><FaWordpress size={26} /></BarLink>
          <BarLink href="#"><Dash d={D.home} size={24} />مرکز مشاوره و ثبت نام</BarLink>
          <BarLink href="#" $latin><Folder />Theme Options</BarLink>
          <BarLink href="#" $latin><Dash d={D.update} size={24} />14</BarLink>
          <BarLink href="#" $dim $latin><Dash d={D.comments} size={24} />0</BarLink>
          <BarLink href="#"><Dash d={D.plus} size={26} />تازه</BarLink>
          <BarLink href="#"><Yoast size={24} /><BarBadge>1</BarBadge></BarLink>
        </BarItems>
        <BarLink href="#">
          سلام آموزش و پرورش
          <Avatar>
            <svg width="20" height="21" viewBox="0 0 20 21" fill="#fff"><ellipse cx="10" cy="9" rx="4.500" ry="5" /><path d="M2 21q0-7 5-8h6q5 1 5 8z" /></svg>
          </Avatar>
        </BarLink>
      </AdminBar>

      <Body dir="rtl">
        <Sidebar>
          <ul>
            {menu.map((m) => (
              <MenuItem key={m.t} $gap={m.gap}>
                <MenuLink href="#">
                  {m.d ? <Dash d={m.d} /> : <Yoast />}
                  {m.t}
                  {m.n && <MenuBadge>{m.n}</MenuBadge>}
                </MenuLink>
              </MenuItem>
            ))}
            <MenuItem $active>
              <MenuLink href="#" $active><Dash d={D.pie} />آمار</MenuLink>
            </MenuItem>
          </ul>
          <SubMenu>
            {submenu.map((s, i) => (
              <li key={s}><SubLink href="#" $current={i === 0}>{s}</SubLink></li>
            ))}
          </SubMenu>
        </Sidebar>

        <Content>
          <TopRow>
            <UpdateNotice $tone="#ffb900">
              <a href="#">وردپرس 5.3.2</a> دردسترس است! <a href="#">لطفا هم‌اکنون بروزرسانی نمایید</a>.
            </UpdateNotice>
            <ScreenOptions>تنظیمات صفحه <Arrow /></ScreenOptions>
          </TopRow>

          <TitleRow>
            <svg width="32" height="32" viewBox="0 0 32 32" fill="none"><path d="M31 11A15 15 0 1 0 31 21" stroke="#4bb0e2" strokeWidth="2" /><path d="M1 18l3-3q2-2 4 1l3 4q1 1 2 0l3-5q1-1 2 0l3 4q1 1 2 0l3-4q1-1 2 0l3-3" stroke="#8fcaec" strokeWidth="2" /></svg>
            <PageTitle>مرور کلی</PageTitle>
          </TitleRow>

          <PluginNotice $tone="#dc3232">
            <div>
              <p>
                There are updates available for the following plugins: <a href="#"><em>Contact Form 7</em></a>, <a href="#"><em>One Click Demo Importer</em></a>, <a href="#"><em>Redux Framework (Theme Options)</em></a> and <a href="#"><em>Regenerate Thumbnails</em></a>.
              </p>
              <LatinLine dir="ltr">
                <a href="#">Begin updating plugins</a> | <a href="#">Dismiss this notice</a>
              </LatinLine>
            </div>
            <CloseButton aria-label="Dismiss">
              <svg width="16" height="16" viewBox="0 0 16 16"><circle cx="8" cy="8" r="8" fill="#c00000" /><path d="M5 5l6 6M11 5l-6 6" stroke="#fff" strokeWidth="2.6" /></svg>
            </CloseButton>
          </PluginNotice>

          <Columns>
            <MainColumn>
              <Box>
                <BoxHead>
                  <BoxTitle>آمار بازدید ها</BoxTitle>
                  <HeadActions>
                    <HeadButton aria-label="Open"><Dash d={D.external} /></HeadButton>
                    <HeadButton aria-label="Refresh"><Dash d={D.update} size={24} /></HeadButton>
                    <Toggle aria-label="Collapse"><Arrow up /></Toggle>
                  </HeadActions>
                </BoxHead>
                <ChartTitle>آخرین بازدید ها در 20 روز گذشته</ChartTitle>
                <ChartArea><Chart /></ChartArea>
                <Legend>
                  <LegendItem>بازدید ها<Swatch $line="#5eb5ef" $fill="#d7ecfb" /></LegendItem>
                  <LegendItem>بازدیدکنندگان<Swatch $line="#f27797" $fill="#ffe0e6" /></LegendItem>
                </Legend>
              </Box>
              <Banner href="#">
                <BannerLines width="200" height="104" viewBox="0 0 200 104"><path d="M0 85L59 30 91 82 178 0h21L89 104 58 46 0 103z" fill="#74497b" /></BannerLines>
                <BannerText>
                  <Headline>MEASURE YOUR SEO PERFORMANCE</Headline>
                  <Subline>SIGN UP TODAY FOR FREE!</Subline>
                </BannerText>
                <Brand>
                  <svg width="78" height="75" viewBox="0 0 78 75" fill="#ffa62b"><path d="M0 27h16l8 48H12z" /><path d="M28 9h15l14 66H44L36 30 22 75H10z" /><path d="M63 0h15L58 75H42z" /></svg>
                  <BrandName>WINCHER</BrandName>
                </Brand>
              </Banner>
            </MainColumn>

            <Box>
              <BoxHead>
                <BoxTitle>خلاصه</BoxTitle>
                <HeadActions>
                  <HeadButton aria-label="Refresh"><Dash d={D.update} size={24} /></HeadButton>
                  <Toggle aria-label="Collapse"><Arrow up /></Toggle>
                </HeadActions>
              </BoxHead>
              <SummaryBody>
                <StatTable>
                  <Cols />
                  <tbody>
                    <Row $h={50}>
                      <RowLabel scope="row">کاربران آنلاین :</RowLabel>
                      <BigNum colSpan={2}><a href="#">56</a></BigNum>
                    </Row>
                    <tr>
                      <td />
                      <ColHead scope="col">بازدیدکنندگان</ColHead>
                      <ColHead scope="col">بازدید ها</ColHead>
                    </tr>
                    {stats.map(([l, a, b]) => (
                      <Row $h={45} key={l}>
                        <RowLabel scope="row">{l}</RowLabel>
                        <Num>{a}</Num>
                        <Num>{b}</Num>
                      </Row>
                    ))}
                  </tbody>
                </StatTable>
                <Rule />
                <SectionTitle>ورودی موتور های جستجو</SectionTitle>
                <StatTable>
                  <Cols />
                  <tbody>
                    <tr>
                      <td />
                      <ColHead scope="col">امروز</ColHead>
                      <ColHead scope="col">دیروز</ColHead>
                    </tr>
                    <Row $h={42}>
                      <RowLabel scope="row">
                        <BingLabel>
                          <svg width="20" height="20" viewBox="0 0 20 20" fill="none"><rect width="20" height="20" rx="3" fill="#2a6ebb" /><path d="M5 4v8.500" stroke="#fff" strokeWidth="2" /><ellipse cx="10" cy="11.500" rx="5" ry="3.500" stroke="#fff" strokeWidth="2" /></svg>
                          بینگ :
                        </BingLabel>
                      </RowLabel>
                      <Num>0</Num>
                      <Num>1</Num>
                    </Row>
                  </tbody>
                </StatTable>
              </SummaryBody>
            </Box>
          </Columns>
        </Content>

        <Watermark>
          <WatermarkTitle>Activate Windows</WatermarkTitle>
          <WatermarkText>Go to Settings to activate Windows.</WatermarkText>
        </Watermark>
      </Body>

      <TaskbarView />
    </Page>
  );
}
